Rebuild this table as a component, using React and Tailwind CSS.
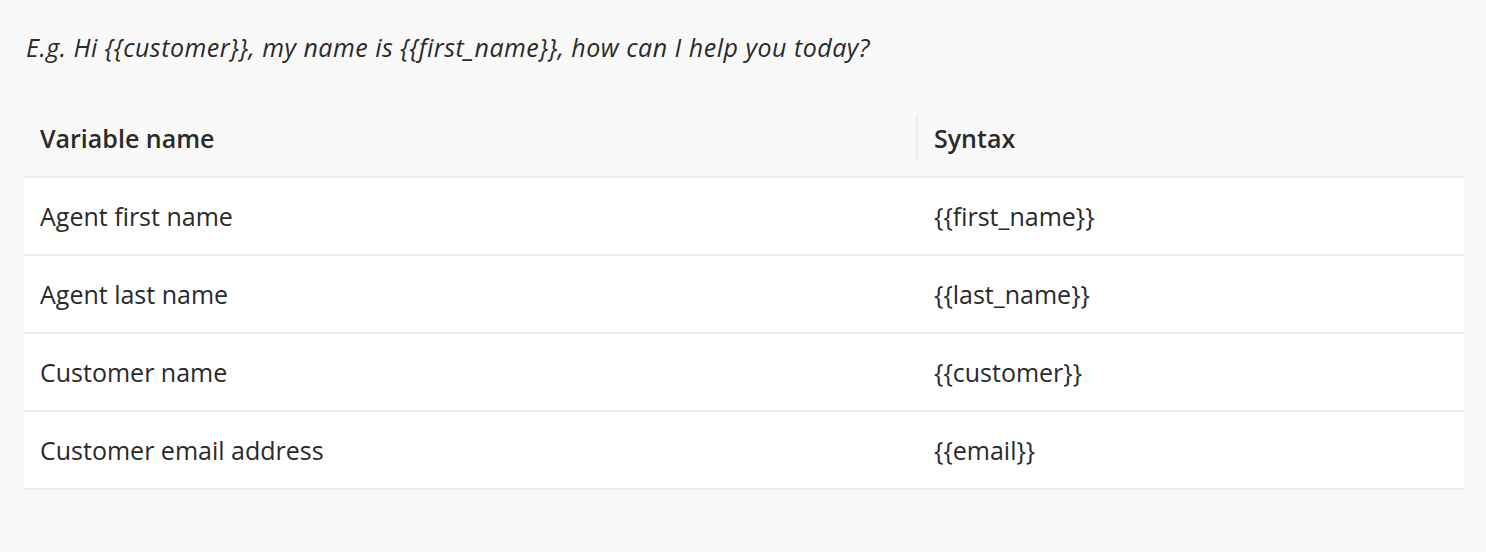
export default function App() {
  const rows = [
    ["Agent first name", "{{first_name}}"],
    ["Agent last name", "{{last_name}}"],
    ["Customer name", "{{customer}}"],
    ["Customer email address", "{{email}}"],
  ];
  return (
    <div className="min-h-[552px] w-full bg-[#f9f9f9] pl-6 pr-[22px] pt-[29px] text-[#2a2a2a]" style={{ fontFamily: "'Open Sans', 'Noto Sans', sans-serif" }}>
      <p className="text-[25px] italic leading-[36px] tracking-[0.5px] pl-[2px]">
        {"E.g. Hi {{customer}}, my name is {{first_name}}, how can I help you today?"}
      </p>
      <div className="mt-[35px] w-full">
        <div className="grid grid-cols-[892px_1fr] h-[78px] border-b-2 border-[#efefef] items-center">
          <div className="pl-4 pt-[2px] text-[25px] font-semibold">Variable name</div>
          <div className="h-[46px] flex items-center border-l-2 border-[#ececec] pl-[16px] pt-[2px] text-[25px] font-semibold">Syntax</div>
        </div>
        {rows.map(([a, b]) => (
          <div key={a} className="grid grid-cols-[892px_1fr] h-[78px] bg-white border-b-2 border-[#efefef] items-center text-[25px] pt-[2px]">
            <div className="pl-4">{a}</div>
            <div className="pl-[18px]">{b}</div>
          </div>
        ))}
      </div>
    </div>
  );
}
